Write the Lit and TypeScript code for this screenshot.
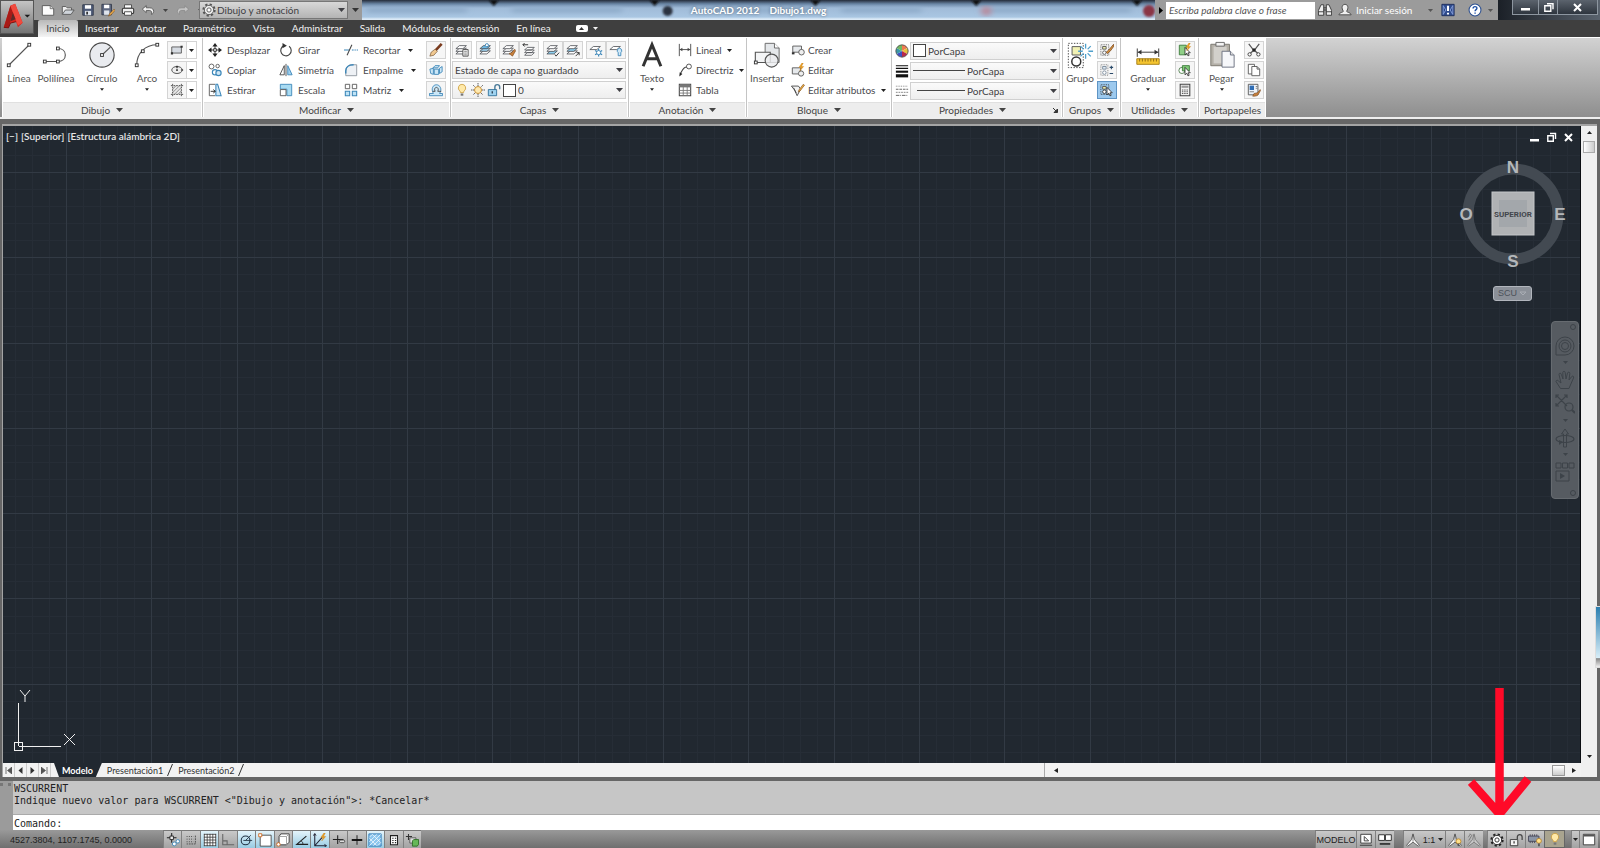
import { LitElement, html, svg, css, nothing, TemplateResult } from "lit";
import { customElement, property } from "lit/decorators.js";

type Glyph = { box: string; art: TemplateResult };

const INK = "#4a4d52";
const BLUE = "#3b86b8";

const layer = (y: number, fill = "#fff") =>
  svg`<path d="M5 ${y}h8l-4 3.5H1z" fill=${fill} stroke=${INK} stroke-width="0.9"/>`;

const layers = (fill = "#fff") => svg`${layer(9, fill)}${layer(6, fill)}${layer(3, fill)}`;

const gear = (stroke: string, fill: string) => svg`
  <circle cx="8" cy="8" r="6.400" fill="none" stroke=${stroke} stroke-width="2.4" stroke-dasharray="2.5 2.52"/>
  <circle cx="8" cy="8" r="5.300" fill=${fill} stroke=${stroke} stroke-width="1"/>
  <circle cx="8" cy="8" r="2.400" fill="#fff" stroke=${stroke} stroke-width="1"/>`;

const bolt = svg`<path d="M12.500 0l-3.500 5h2.500l-1.500 4 4.500-5h-2.500l2-4z" fill="#f0a020" stroke="#b87412" stroke-width="0.4"/>`;
const pencil = svg`<path d="M14 1.500l-5 6.500-.6 2.200 2-1.200 5-6.500z" fill="#f2b440" stroke="#7a4a22" stroke-width="0.7"/>`;
const cursor = svg`<path d="M8 5v8.500l2-1.800 1.400 3 1.400-.7-1.400-2.800h2.600z" fill="#fff" stroke="#222" stroke-width="0.9"/>`;
const bulb = svg`<path d="M8 1.500a4.200 4.200 0 0 0-2.600 7.500c.6.6.8 1.200.8 2h3.600c0-.8.2-1.400.8-2a4.200 4.200 0 0 0-2.600-7.500z" fill="#ffe9a8" stroke="#c99a3a" stroke-width="0.9"/><path d="M6.500 12h3v2.500h-3z" fill="#777"/>`;
const tripod = (fill: string) => svg`<path d="M8 1L6.300 7.500.8 14l1 1L8 10.500l6.200 4.500 1-1-5.500-6.500z" fill=${fill} stroke="#444" stroke-width="0.9"/><path d="M8 2v8" stroke="#444" stroke-width="0.7"/>`;
const node = (x: number, y: number) => svg`<rect x=${x - 1.5} y=${y - 1.5} width="3" height="3" fill="#fff" stroke="#333" stroke-width="1"/>`;

const GLYPHS: Record<string, Glyph> = {
  logo: {
    box: "0 0 34 34",
    art: svg`<path d="M3 28L10 5l5-2 8 20-5 5-2-6-6 1.500-2 5z" fill="#d8261c"/><path d="M3 28L10 5l2.500 7L8 28.500z" fill="#a81a16"/><path d="M10 5l5-2 8 20-5 3z" fill="#f04a3e"/><path d="M12.500 12l3 7.500-5.500 2z" fill="#5c2a28"/><path d="M3 28l5 .5 2-5 6-1.500" stroke="#7a0e0c" fill="none"/><path d="M25 14.500h6l-3 3z" fill="#1a1a1a"/>`,
  },
  fresh: { box: "0 0 16 16", art: svg`<path d="M1.500 3h9l4 3.500v7.500h-13z" fill="#fdfdfd" stroke="#555"/><path d="M10.500 3v3.500h4" fill="#ddd" stroke="#555" stroke-width="0.8"/>` },
  open: { box: "0 0 16 16", art: svg`<path d="M1.500 13V4h4l1.500 1.500h5V8" fill="#eee" stroke="#555"/><path d="M1.500 13L5 8h10l-3.500 5z" fill="#cfd4da" stroke="#555"/>` },
  save: { box: "0 0 16 16", art: svg`<path d="M2 2h12v12H2z" fill="#4e5b78" stroke="#333a4a"/><path d="M4.500 2.500h7v4h-7z" fill="#fff"/><path d="M4.500 9h7v5h-7z" fill="#dfe4ec"/><path d="M6 10h2v3H6z" fill="#333"/>` },
  saveAs: { box: "0 0 16 16", art: svg`<path d="M1 1.500h11v12H1z" fill="#5d6780" stroke="#333a4a"/><path d="M3.500 2h6v4h-6z" fill="#fff"/><path d="M3.500 8.500h6v5h-6z" fill="#dfe4ec"/><path d="M15 7l-5 5-1.500 3 3-1.500 4.500-5z" fill="#f0b050" stroke="#80501a" stroke-width="0.7"/>` },
  print: { box: "0 0 16 16", art: svg`<path d="M4 2h8v4H4z" fill="#fff" stroke="#444"/><rect x="1.500" y="6" width="13" height="6" rx="1.500" fill="#f0f0f0" stroke="#333" stroke-width="1.200"/><path d="M4 10h8v4H4z" fill="#fff" stroke="#444"/>` },
  undo: { box: "0 0 16 16", art: svg`<path d="M1.500 7L6 3v2.500h4c3 0 4.500 2 4.500 4s-1 3-2.500 3.500c1-2 0-4.500-2.500-4.500H6V11z" fill="#f2f2f2" stroke="#555"/>` },
  redo: { box: "0 0 16 16", art: svg`<path d="M14.500 7L10 3v2.500H6c-3 0-4.500 2-4.500 4s1 3 2.500 3.500c-1-2 0-4.500 2.500-4.500H10V11z" fill="#c4c4c4" stroke="#8a8a8a"/>` },
  gear: { box: "0 0 16 16", art: gear("#555", "#eee") },
  gearDark: { box: "0 0 16 16", art: gear("#222", "#fff") },
  find: { box: "0 0 16 16", art: svg`<path d="M3.500 2h3v12h-6V8.500zM12.500 2h-3v12h6V8.500z" fill="#eee" stroke="#333"/><path d="M6.500 5.500h3M6.500 8h3M1 10h5.500M9.500 10h5.500" stroke="#333"/>` },
  user: { box: "0 0 16 16", art: svg`<path d="M8 1.500c2 0 3.300 1.500 3.300 3.700S9.800 9.500 9.800 9.500c.4 1.300 4.700 1 5.200 4H1c.5-3 4.800-2.700 5.200-4 0 0-1.500-2-1.500-4.300S6 1.500 8 1.500z" fill="#f0f0f0" stroke="#444"/>` },
  exchange: { box: "0 0 16 16", art: svg`<path d="M1 1.500h14v13H1z" fill="#2e4a8c" stroke="#1a2a5a"/><path d="M2.500 3v10M13.500 3v10M2.500 3l3 5-3 5M13.500 3l-3 5 3 5" stroke="#8aa2dc" fill="none"/><path d="M8 3v6M8 11v2" stroke="#fff" stroke-width="2.400"/>` },
  help: { box: "0 0 16 16", art: svg`<circle cx="8" cy="8" r="6.800" fill="#fff" stroke="#2c4f8f" stroke-width="1.200"/><path d="M5.800 6.300c0-3 4.500-2.800 4.400-.2 0 1.500-2.100 1.500-2.100 3.400M8.100 10.800v1.600" stroke="#1d4fa5" stroke-width="1.600" fill="none"/>` },
  line: { box: "0 0 30 30", art: svg`<path d="M4 26L26 4" stroke="#555" stroke-width="1.200"/>${node(4, 26)}${node(26, 4)}` },
  polyline: { box: "0 0 30 30", art: svg`<path d="M3 22h14c5 0 8-3 8-7s-3-7-8-7" stroke="#555" stroke-width="1.200" fill="none"/>${node(3, 22)}${node(17, 22)}${node(17, 8)}` },
  circle: { box: "0 0 30 30", art: svg`<circle cx="15" cy="15" r="13" fill="#e9ebef" stroke="#4a4a4a" stroke-width="1.200"/><path d="M15 15l9-8.500" stroke="#555" stroke-width="1.200"/>${node(15, 15)}` },
  arc: { box: "0 0 30 30", art: svg`<path d="M4 26C4 13 13 4 26 4" stroke="#555" stroke-width="1.200" fill="none"/>${node(4, 26)}${node(10.5, 11)}${node(26, 4)}` },
  rect: { box: "0 0 16 16", art: svg`<path d="M2 4.500h11v7H2z" fill="#d6dbe2" stroke="#555"/><path d="M1 10.500h2.500V13H1zM12 3h2.500v2.500H12z" fill="#333"/>` },
  ellipse: { box: "0 0 16 16", art: svg`<ellipse cx="8" cy="8" rx="6" ry="4" fill="#eee" stroke="#444"/><path d="M7 8h2M8 7v2M12.500 8h2.500M8 3v3" stroke="#222" stroke-width="1.400"/>` },
  hatch: { box: "0 0 16 16", art: svg`<path d="M3 3h10v10H3z" fill="#e8e8e8"/><path d="M3 7l4-4M3 11l8-8M5 13l8-8M9 13l4-4" stroke="#777" stroke-width="0.9"/><path d="M1 3h14M1 13h14M3 1v14M13 1v14" stroke="#444" stroke-dasharray="2 1"/>` },
  move: { box: "0 0 16 16", art: svg`<path d="M8 0l3 4H5zM8 16l3-4H5zM0 8l4-3v6zM16 8l-4-3v6z" fill="#222"/><path d="M8 3v10M3 8h10" stroke="#222"/><path d="M6.500 6.500h3v3h-3z" fill="#fff" stroke="#222"/>` },
  rotate: { box: "0 0 16 16", art: svg`<path d="M6 3a6 6 0 1 0 5.500.8" stroke="#444" stroke-width="1.300" fill="none"/><path d="M4 0l5 3-5 3z" fill="#333"/>` },
  trim: { box: "0 0 16 16", art: svg`<path d="M0 8h6M9 8h2M12 8h1.500M14.500 8H16" stroke=${BLUE} stroke-width="1.400"/><path d="M3.500 14L9 2" stroke="#444" stroke-width="1.200"/>` },
  copy: { box: "0 0 16 16", art: svg`<circle cx="4" cy="4" r="2.800" fill="#fff" stroke="#555"/><circle cx="11" cy="3.500" r="2" fill="#fff" stroke="#555"/><circle cx="8" cy="10.500" r="3" fill="#fff" stroke=${BLUE} stroke-width="1.300"/><circle cx="12" cy="11.500" r="3" fill="#cfe6f5" stroke=${BLUE} stroke-width="1.300"/>` },
  mirror: { box: "0 0 16 16", art: svg`<path d="M6 3v10.500H1z" fill="#fff" stroke="#444"/><path d="M10 3v10.500h5z" fill="#9fd0ee" stroke=${BLUE}/><path d="M8 1v14" stroke="#444"/>` },
  fillet: { box: "0 0 16 16", art: svg`<path d="M2 14.500V9c0-4 3-7 7-7h5.500v12.500z" fill="#eef1f5" stroke="#8a939c"/><path d="M2 12V9c0-4 3-7 9-7" stroke=${BLUE} stroke-width="1.600" fill="none"/>` },
  stretch: { box: "0 0 16 16", art: svg`<path d="M8 1.500H1.500v13H8" stroke="#555" fill="none"/><path d="M9 1.500h2l4 13H9z" fill="#cfe8f8" stroke=${BLUE} stroke-width="1.200"/><path d="M3 9.500h5M6 7.500l2.500 2L6 11.500" stroke="#222" fill="none"/>` },
  scale: { box: "0 0 16 16", art: svg`<path d="M1.500 1.500h13v13H9V7H1.500z" fill="#a9dbf2" stroke=${BLUE}/><path d="M1.500 7.500H8v7H1.500z" fill="#fff" stroke="#555"/>` },
  array: { box: "0 0 16 16", art: svg`<path d="M1.500 1.500h5v5h-5zM9.500 1.500h5v5h-5z" fill="#fff" stroke="#555"/><path d="M1.500 9.500h5v5h-5zM9.500 9.500h5v5h-5z" fill="#bfe3f6" stroke=${BLUE} stroke-width="1.200"/>` },
  erase: { box: "0 0 16 16", art: svg`<path d="M14.500 1L7.500 8.500" stroke="#7a3b1e" stroke-width="3"/><path d="M7 7l2.500 2.500-4 4.500-4.500 1 1.500-4.500z" fill="#f0c890" stroke="#7a5a3a" stroke-width="0.8"/>` },
  explode: { box: "0 0 16 16", art: svg`<path d="M4.500 5.500L7 3h5L10 5.500zM1 7l4-1v7l-3-1zM6 7h5v6H6zM12 6l3-2v6l-3 2z" fill="#cbe7f7" stroke=${BLUE}/>` },
  offset: { box: "0 0 16 16", art: svg`<path d="M.5 14.500h15v-2.500H12C15.500 7 12.500 2 8.500 2S2 6.500 5 12H.5z" fill="#cbe7f7" stroke=${BLUE}/><path d="M4 9.500h3C5.500 7 7 5 8.500 5s3 2 1.500 4.500h4" stroke="#444" fill="none"/>` },
  layerProps: { box: "0 0 16 16", art: svg`${layers()}<path d="M9 7.500h6v7.500H9z" fill="#fff" stroke="#444"/><path d="M10.500 9.500h3M10.500 11.500h3M10.500 13.500h3" stroke="#555" stroke-width="0.8"/>` },
  layerMatch: { box: "0 0 16 16", art: svg`${layer(9)}${layer(6, "#9fd3f0")}${layer(3, "#6bb8e4")}<circle cx="9" cy="2.500" r="1.800" fill="#fff" stroke=${BLUE}/>` },
  layerBrush: { box: "0 0 16 16", art: svg`${layers()}<path d="M14.500 7l1 2-3.500 6-4-3 3-1z" fill="#c8803c" stroke="#7a4a22" stroke-width="0.7"/>` },
  layerPrev: { box: "0 0 16 16", art: svg`<path d="M6 11h8l-3 3H3zM6 8h8l-3 3H3zM6 5h8l-3 3H3z" fill="#fff" stroke=${INK} stroke-width="0.9"/><path d="M1 2h6M1 2l2-2M1 2l2 2" stroke="#222" fill="none"/>` },
  layerIso: { box: "0 0 16 16", art: svg`${layer(9, "#8fd0f0")}${layer(6)}${layer(3)}<path d="M10 13l1.500 2L15 11" stroke="#222" fill="none"/>` },
  layerUniso: { box: "0 0 16 16", art: svg`${layer(9)}${layer(6, "#8fd0f0")}${layer(3)}<path d="M11 15l4-4m-3 0h3v3" stroke="#222" fill="none"/>` },
  layerFreeze: { box: "0 0 16 16", art: svg`${layer(4)}<path d="M11 6.500v9M7 8.500l8 5M15 8.500l-8 5" stroke=${BLUE} stroke-width="1.400"/><circle cx="11" cy="11" r="2.400" fill="#fff" stroke=${BLUE}/>` },
  layerOff: { box: "0 0 16 16", art: svg`${layer(4)}<path d="M12 6a2.800 2.800 0 0 0-1.500 5v3.500h3V11A2.800 2.800 0 0 0 12 6z" fill="#cfe8f8" stroke=${BLUE}/>` },
  bulb: { box: "0 0 16 16", art: bulb },
  sun: { box: "0 0 16 16", art: svg`<path d="M8 0v16M0 8h16M2.500 2.500l11 11M13.500 2.500l-11 11" stroke="#4a4a4a" stroke-dasharray="1.500 0.600"/><circle cx="8" cy="8" r="4" fill="#ffe9b0" stroke="#c58a2a"/>` },
  lock: { box: "0 0 16 16", art: svg`<path d="M9 8V4.500c0-3.500 5.500-3.500 5.500 0V7" stroke="#4a7a98" stroke-width="1.600" fill="none"/><path d="M1.500 7.500h9.500v7H1.500z" fill="#9fd3f0" stroke="#2d6f99"/><path d="M6 9.500V12" stroke="#234" stroke-width="1.400"/>` },
  text: { box: "0 0 30 30", art: svg`<path d="M5.500 27L15 4l9.500 23M9 19h12" fill="none" stroke="#333" stroke-width="3.200"/>` },
  linear: { box: "0 0 16 16", art: svg`<path d="M1.500 1v14M14.500 1v14M2 7.500h12" stroke="#444"/><path d="M2 7.500l3-2v4zM14 7.500l-3-2v4z" fill="#444"/>` },
  leader: { box: "0 0 16 16", art: svg`<circle cx="12.500" cy="4" r="2.800" fill="#fff" stroke="#444"/><path d="M10 4.500C6 4.500 5 8 3 12" stroke="#444" stroke-width="1.200" fill="none"/><path d="M1.500 15.500l.5-5 3 2z" fill="#222"/>` },
  table: { box: "0 0 16 16", art: svg`<path d="M1.500 1.500h13v13h-13z" fill="#fff" stroke="#444" stroke-width="1.200"/><path d="M1.500 2h13v3h-13z" fill="#777"/><path d="M1.500 8.500h13M1.500 11.500h13M6 4v10.500M10.500 4v10.500" stroke="#777"/>` },
  insert: { box: "0 0 30 30", art: svg`<path d="M13 2.500h10l5 5v15.500H13z" fill="#e4e7ea" stroke="#666"/><path d="M23 2.500v5h5" fill="#fff" stroke="#666"/><path d="M2.500 12h16v11h-16z" fill="#f3f4f5" stroke="#555" stroke-width="1.200"/><circle cx="20" cy="21" r="7" fill="#eceef0" fill-opacity="0.8" stroke="#555" stroke-width="1.200"/>${node(3, 23)}` },
  blockNew: { box: "0 0 16 16", art: svg`<path d="M2 3.500h10v7H2z" fill="#e6e9ec" stroke="#555"/><circle cx="12" cy="10.500" r="3.200" fill="#eee" stroke="#555"/><path d="M1 10.500h3v2.500H1z" fill="#333"/>` },
  blockEdit: { box: "0 0 16 16", art: svg`<path d="M1.500 5.500h9.500v7H1.500z" fill="#e6e9ec" stroke="#555"/><circle cx="11.500" cy="12" r="3" fill="#eee" stroke="#555"/>${bolt}` },
  blockAttr: { box: "0 0 16 16", art: svg`<path d="M.5 3.500h8L11 7l-4 7.500L4 8z" fill="#f4f4f4" stroke="#444"/><path d="M3 5.500l3 6" stroke="#444"/>${pencil}` },
  wheel: { box: "0 0 16 16", art: svg`<path d="M8 8V1a7 7 0 0 1 6.100 3.500z" fill="#f07a50"/><path d="M8 8l6.100-3.500a7 7 0 0 1 0 7z" fill="#e8c23c"/><path d="M8 8l6.100 3.500A7 7 0 0 1 8 15z" fill="#b82a4a"/><path d="M8 8v7a7 7 0 0 1-6.100-3.500z" fill="#3f4fc4"/><path d="M8 8l-6.100 3.500a7 7 0 0 1 0-7z" fill="#3a98a8"/><path d="M8 8L1.900 4.500A7 7 0 0 1 8 1z" fill="#6fb860"/><circle cx="8" cy="8" r="7" fill="none" stroke="#555"/>` },
  weight: { box: "0 0 16 16", art: svg`<path d="M1 2h14M1 5h14" stroke="#111" stroke-width="1.200"/><path d="M1 8.800h14" stroke="#111" stroke-width="2.400"/><path d="M1 13.500h14" stroke="#111" stroke-width="3.600"/>` },
  dashes: { box: "0 0 16 16", art: svg`<path d="M1 2.500h14" stroke="#777" stroke-dasharray="1 1"/><path d="M1 6h14" stroke="#555" stroke-dasharray="3 1"/><path d="M1 9.500h14" stroke="#777" stroke-dasharray="2 1"/><path d="M1 13h14" stroke="#555" stroke-dasharray="4 1 1 1"/>` },
  group: { box: "0 0 30 30", art: svg`<path d="M2.500 2.500h16v26h-16z" fill="none" stroke="#444" stroke-dasharray="1.500 1.500"/><path d="M6.500 6h9v9h-9z" fill="#f1f1b4" stroke="#555"/><circle cx="11" cy="22" r="4.800" fill="#fff" stroke="#333" stroke-width="1.600"/><path d="M21 3v16M13 11h16M15.500 5.500l11 11M26.500 5.500l-11 11" stroke="#4fa0cc" stroke-width="1.400"/><circle cx="21" cy="11" r="3" fill="#fff"/>` },
  groupEdit: { box: "0 0 16 16", art: svg`<path d="M1 2h9v12H1z" stroke="#555" stroke-dasharray="1 1" fill="none"/><path d="M3 4h4v3H3z" fill="#eea" stroke="#555"/><circle cx="5" cy="11" r="2" fill="#fff" stroke="#555"/><path d="M15.500 1.500L10 8l-3 2.500 1.500 1.500 3-2.500 4.500-6z" fill="#d8923c" stroke="#6a3a12" stroke-width="0.8"/>` },
  groupAdd: { box: "0 0 16 16", art: svg`<path d="M1 2h8v12H1z" stroke="#777" stroke-dasharray="1 1" fill="none"/><path d="M3 4h4v3H3z" fill="#dfeaf4" stroke="#789"/><circle cx="5" cy="11" r="2" fill="#fff" stroke="#789"/><path d="M11 5h4M13 3v4M11 12h4" stroke="#2a4a6a" stroke-width="1.200"/>` },
  groupPick: { box: "0 0 16 16", art: svg`<path d="M1 2h9v11H1z" stroke="#333" stroke-dasharray="1 1" fill="none"/><path d="M3 4h4v3H3z" fill="#eea" stroke="#555"/><circle cx="5" cy="10" r="2" fill="#fff" stroke="#333"/>${cursor}` },
  measure: { box: "0 0 30 30", art: svg`<path d="M3.500 8v9M26.500 8v9M4 12h22" stroke="#333"/><path d="M4 12l4-2.500v5zM26 12l-4-2.500v5z" fill="#333"/><path d="M3 19h24v6H3z" fill="#f4c430" stroke="#a8801a"/><path d="M6 19v3M9 19v3M12 19v3M15 19v3M18 19v3M21 19v3M24 19v3" stroke="#8a6a14"/>` },
  quickSelect: { box: "0 0 16 16", art: svg`<path d="M1.500 2.500h8v11h-8z" fill="#8fcf86" stroke="#3c7a3a"/>${cursor}${bolt}` },
  selectSimilar: { box: "0 0 16 16", art: svg`<circle cx="4.500" cy="8.500" r="3.500" fill="#fff" stroke="#4a7a48"/><path d="M5 3h8v6H5z" fill="#7fca78" stroke="#3c7a3a"/>${cursor}` },
  calc: { box: "0 0 16 16", art: svg`<path d="M2.500 1.500h11v13h-11z" fill="#f2f2f2" stroke="#444" stroke-width="1.200"/><path d="M4 3h8v2.500H4z" fill="#999"/><path d="M4.500 8h7M4.500 10h7M4.500 12h7" stroke="#444" stroke-dasharray="1.600 1"/>` },
  paste: { box: "0 0 30 30", art: svg`<path d="M3 3.500h20v23H3z" fill="#b4b0a8" stroke="#7a766e"/><path d="M6 6h14v18H6z" fill="#d2d0cb"/><path d="M8.500 1.500h9v4h-9z" fill="#f4f4f4" stroke="#666"/><path d="M15 11h9l4 4v13H15z" fill="#f6f7fa" stroke="#6a7080"/><path d="M24 11v4h4" fill="#ddd" stroke="#6a7080"/>` },
  cut: { box: "0 0 16 16", art: svg`<path d="M2 1l5 6.500 5 4M14 1L9 7.500l-5 4" stroke="#555" stroke-width="1.400" fill="none"/><circle cx="3" cy="13" r="1.900" fill="#fff" stroke="#333"/><circle cx="13" cy="13" r="1.900" fill="#fff" stroke="#333"/><circle cx="8" cy="8" r="2" fill="#222"/>` },
  copyClip: { box: "0 0 16 16", art: svg`<path d="M1.500 1.500h7v11h-7z" fill="#fff" stroke="#555"/><path d="M5.500 4h6l3 3v7.500h-9z" fill="#fff" stroke="#555"/><path d="M11.500 4v3h3" fill="none" stroke="#555"/>` },
  matchProps: { box: "0 0 16 16", art: svg`<path d="M1.500 1.500h11v12h-11z" fill="#eef3fa" stroke="#555"/><path d="M3 3h5v5H3z" fill="#2f6db5"/><path d="M3 10h5M10 4h2M10 6h2" stroke="#777"/><path d="M15 7.500l-3 3.500-4 1-1.500 3c3 .5 6.500-.5 7-3l2-3.500z" fill="#c8803c" stroke="#7a4a22" stroke-width="0.7"/>` },
  infer: { box: "0 0 16 16", art: svg`<path d="M6.500 0v11M1 5.500h11" stroke="#222" stroke-width="1.200"/><path d="M4.500 3.500h4v4h-4z" fill="#eee" stroke="#222"/><circle cx="9.500" cy="12.500" r="2.200" fill="#fff" stroke=${BLUE}/><circle cx="13.500" cy="9.500" r="2" fill="#fff" stroke=${BLUE}/>` },
  snap: { box: "0 0 16 16", art: svg`<path d="M3 4h8M3 7h8M3 10h8" stroke="#333" stroke-dasharray="1 1.600"/><path d="M13 3v9.500H3" stroke="#444" stroke-dasharray="2 1" fill="none"/>` },
  grid: { box: "0 0 16 16", art: svg`<path d="M1 1h14v14H1z" fill="#fff"/><path d="M1.500 1v14M4.800 1v14M8 1v14M11.200 1v14M14.500 1v14M1 1.500h14M1 4.800h14M1 8h14M1 11.200h14M1 14.500h14" stroke="#333" stroke-width="0.900"/>` },
  ortho: { box: "0 0 16 16", art: svg`<path d="M2 1v12.500h13M2 9h5v4.500" stroke="#666" fill="none" stroke-width="1.200"/>` },
  polar: { box: "0 0 16 16", art: svg`<circle cx="7.500" cy="8.500" r="5" fill="none" stroke="#234" stroke-width="1.200"/><path d="M5 8.500h10M7.500 8.500l6-6" stroke="#234"/>` },
  osnap: { box: "0 0 16 16", art: svg`<path d="M2.500 2.500h12.500v12.500h-12.500z" fill="#fff" stroke="#444"/><path d="M.8 .8h3.500v3.500H.8z" fill="#fff" stroke="#d2691e"/>` },
  osnap3d: { box: "0 0 16 16", art: svg`<path d="M3.500 4l2-3H15v9.500l-3 3H3.500z" fill="#fff" stroke="#333"/><path d="M3.500 4H12v9.500M12 4l3-3" stroke="#999" fill="none"/><circle cx="2.800" cy="13" r="2" fill="#fff" stroke="#d2691e"/>` },
  otrack: { box: "0 0 16 16", art: svg`<path d="M15 13H2L13 3.500" stroke="#222" stroke-width="1.300" fill="none"/><path d="M7 9c1.500 1 2 2 2 3.500" stroke="#222" fill="none"/>` },
  ducs: { box: "0 0 16 16", art: svg`<path d="M2 1v13.500h13M2.500 14l8-9" stroke="#223" fill="none" stroke-width="1.200"/><path d="M.5 3L2 .5 3.500 3M13 13l2.500 1.500L13 16" stroke="#223" fill="none"/>${bolt}` },
  dyn: { box: "0 0 16 16", art: svg`<path d="M6.500 2.500v10M1 7.500h12" stroke="#222" stroke-width="1.200"/><rect x="8.500" y="8" width="6" height="3" rx="1.500" fill="#ddd" stroke="#444"/>` },
  lwt: { box: "0 0 16 16", art: svg`<path d="M8 2.500v11" stroke="#111"/><path d="M2 8h12" stroke="#111" stroke-width="2.200"/>` },
  transp: { box: "0 0 16 16", art: svg`<path d="M1 1h14v14H1z" fill="#8cc6ee" stroke="#2f78b5"/><path d="M1.500 5l3.500-3.500M1.500 10L10 1.500M1.500 14.500l13-13M6 14.500L14.500 6M11 14.500l3.500-3.500M1.500 6l8.500 8.500M5 1.500l9.500 9.500" stroke="#fff" stroke-width="0.8"/>` },
  quickProps: { box: "0 0 16 16", art: svg`<path d="M4 3h8v10.500H4z" fill="#fff" stroke="#222" stroke-width="1.200"/><path d="M6 6h1.500M9 6h1.500M6 8.500h1.500M9 8.500h1.500M6 11h1.500M9 11h1.500" stroke="#222" stroke-width="1.200"/>` },
  cycle: { box: "0 0 16 16", art: svg`<path d="M4 1v7M1 4h7" stroke="#333" stroke-width="1.200"/><path d="M5.500 5.500h7v6h-7z" fill="#ddd" stroke="#555"/><path d="M8.500 9l1.500-1.500h5.500V13L14 15H8.500z" fill="#66b858" stroke="#2c6b22"/>` },
  modelTab: { box: "0 0 16 16", art: svg`<path d="M2 1.500h12v10H2z" fill="#fff" stroke="#333"/><path d="M6 4v5h5zM1 14h14" stroke="#333" fill="none"/>` },
  views: { box: "0 0 16 16", art: svg`<path d="M.8 2h6.700v6.500H.8zM8.500 2h6.700v6.500H8.500z" fill="#fff" stroke="#222"/><path d="M2 12.500h12" stroke="#333" stroke-width="2"/>` },
  scaleA: { box: "0 0 16 16", art: tripod("#fff") },
  scaleB: { box: "0 0 16 16", art: svg`${tripod("#fff")}<circle cx="12" cy="9.500" r="2.800" fill="#ffe08a" stroke="#c08a2a"/><path d="M12 12v3" stroke="#555" stroke-width="2"/>` },
  scaleC: { box: "0 0 16 16", art: svg`<g opacity="0.6">${tripod("#ddd")}<path d="M1.500 5l2-3.500M2 8.500L6 2M3 1l2 1" stroke="#444"/></g>` },
  lockOpen: { box: "0 0 16 16", art: svg`<path d="M9.500 7V4.500c0-3.500 5.500-3.500 5.500 0V8" stroke="#444" stroke-width="1.400" fill="none"/><path d="M1.500 7.500h8.500v7H1.500z" fill="#f4f4f4" stroke="#333"/><path d="M5.800 9.500V12" stroke="#333" stroke-width="1.400"/>` },
  hardware: { box: "0 0 16 16", art: svg`<path d="M.5 3.500h12v6H.5z" fill="#8b95a5" stroke="#445"/><path d="M2.500 1.500v2M5 1.500v2M7.500 1.500v2M10 1.500v2M2.500 9.500v2M5 9.500v2M7.500 9.500v2" stroke="#445"/><circle cx="12.500" cy="9" r="2.800" fill="#ffe08a" stroke="#b8862a"/><path d="M12.500 12v3" stroke="#555" stroke-width="2"/>` },
  clean: { box: "0 0 16 16", art: svg`<path d="M1.500 1.500h13v12h-13z" fill="#fff" stroke="#333"/><path d="M2 2h12v2H2z" fill="#555"/>` },
  navWheel: { box: "0 0 20 20", art: svg`<path d="M1 10a9 9 0 1 1 9 9H1z" fill="none" stroke="#3d4349"/><circle cx="10" cy="10" r="6" fill="none" stroke="#3d4349"/><circle cx="10" cy="10" r="3.500" fill="none" stroke="#3d4349"/>` },
  navPan: { box: "0 0 20 20", art: svg`<path d="M5.500 18.500L1 11.500c0-1.500 2-1.500 2.500-.5L6 13 4 4.500c0-1.800 2-1.800 2.400 0L8 9 7.800 2.500c.2-1.600 2.200-1.600 2.400 0L11 9l1.500-6c.6-1.500 2.500-1 2.300.5L14 10l2.800-3.500c1-1 2.400 0 1.700 1.500l-3.500 8-1 2.500z" fill="none" stroke="#3d4349"/>` },
  navZoom: { box: "0 0 20 20", art: svg`<path d="M1 1l11 11M12 1L1 12M1 4V1h3M9 1h3v3M1 9v3h3" stroke="#3d4349" fill="none" stroke-width="1.200"/><circle cx="14" cy="13" r="4" fill="none" stroke="#3d4349" stroke-width="1.200"/><path d="M17 16l3 3" stroke="#3d4349" stroke-width="2"/>` },
  navOrbit: { box: "0 0 20 20", art: svg`<path d="M8.500 19V6H6.500L10 1l3.500 5h-2v13z" fill="none" stroke="#3d4349"/><ellipse cx="10" cy="11" rx="9" ry="3.500" fill="none" stroke="#3d4349" stroke-width="1.200"/><path d="M4 12l4 2-4 3z" fill="#3d4349"/>` },
  navMotion: { box: "0 0 20 20", art: svg`<path d="M1 1h5v5H1zM7.500 1h5v5h-5zM14 1h5v5h-5zM1 9h13v10H1z" fill="none" stroke="#3d4349"/><path d="M5 11l5 3-5 3z" fill="#3d4349"/>` },
};

@customElement("cad-icon")
export class CadIcon extends LitElement {
  static styles = css`
    :host { display: inline-flex; flex: none; width: 14px; height: 14px; }
    svg { width: 100%; height: 100%; display: block; fill: none; }
  `;
  @property() name = "";
  render() {
    const g = GLYPHS[this.name];
    return g ? html`<svg viewBox=${g.box} aria-hidden="true">${g.art}</svg>` : nothing;
  }
}

const caret = html`<svg class="caret" viewBox="0 0 7 4" aria-hidden="true"><path d="M0 0h7L3.500 4z" fill="currentColor"/></svg>`;
const dot = html`<svg class="dot" viewBox="0 0 5 3" aria-hidden="true"><path d="M0 0h5L2.500 3z" fill="currentColor"/></svg>`;

const big = (icon: string, label: string, menu = false) => html`
  <button class="big"><cad-icon class="xl" name=${icon}></cad-icon><span>${label}</span>${menu ? dot : nothing}</button>`;
const row = (icon: string, label: string, menu = false) => html`
  <button class="row"><cad-icon name=${icon}></cad-icon><span>${label}</span>${menu ? dot : nothing}</button>`;
const small = (icon: string, label: string, on = false) => html`
  <button class="small ${on ? "on" : ""}" aria-label=${label}><cad-icon name=${icon}></cad-icon></button>`;
const split = (icon: string, label: string) => html`
  <span class="split"><button class="small" aria-label=${label}><cad-icon name=${icon}></cad-icon></button><button class="more" aria-label="${label}, más">${dot}</button></span>`;

const STEP = 85.3;
const MAJORS = [...Array(48).keys()];

const QUICK: [string, string][] = [
  ["fresh", "Nuevo"], ["open", "Abrir"], ["save", "Guardar"], ["saveAs", "Guardar como"], ["print", "Trazar"],
];

const TOGGLES: [string, string, boolean][] = [
  ["infer", "Inferir restricciones", false], ["snap", "Forzcursor", false], ["grid", "Rejilla", true],
  ["ortho", "Orto", false], ["polar", "Rastreo polar", true], ["osnap", "Refent", true],
  ["osnap3d", "Refent 3D", false], ["otrack", "Rastreo", true], ["ducs", "SCP dinámico", true],
  ["dyn", "Entrada dinámica", false], ["lwt", "Grosor de línea", false], ["transp", "Transparencia", true],
  ["quickProps", "Propiedades rápidas", false], ["cycle", "Ciclo de selección", false],
];

@customElement("app-root")
export class AppRoot extends LitElement {
  static styles = css`
    :host { display: flex; flex-direction: column; position: relative; height: 100vh; min-height: 600px; overflow: hidden; background: #666;
      font: 10px/14px Lato, "Open Sans", sans-serif; color: #3f3f44; }
    * { box-sizing: border-box; }
    button, select, input { font: inherit; color: inherit; margin: 0; padding: 0; border: 0; background: none; }
    button { display: flex; align-items: center; white-space: nowrap; }
    .caret { width: 7px; height: 4px; flex: none; }
    .dot { width: 5px; height: 3px; flex: none; }

    .header { display: grid; grid-template-columns: 34px minmax(0, 1fr); grid-template-rows: 20px 17px; flex: none; background: #3f3f3f; }
    .logo { grid-row: 1 / 3; background: linear-gradient(#c4c4c4, #747474); border: 1px solid #555; height: 34px; }
    .logo cad-icon { width: 32px; height: 32px; }
    .title { display: flex; background: #9b9b9b; min-width: 0; }
    .quick { display: flex; align-items: center; gap: 6px; padding-left: 7px; width: 165px; flex: none; color: #444; }
    .quick .dot { margin: 0 2px; }
    .workspace { display: flex; align-items: center; gap: 1px; width: 149px; height: 18px; flex: none; border: 1px solid #777; background: linear-gradient(#d8d8d8, #b4b4b4); padding: 0 2px; margin-top: 1px; }
    .workspace select, .combo select { appearance: none; flex: 1; min-width: 0; height: 100%; }
    .custom { width: 14px; flex: none; justify-content: center; color: #333; }
    .glass { flex: 1; min-width: 0; display: flex; justify-content: center; align-items: center; overflow: hidden; background: linear-gradient(#252c3a, #6b87a6 4px, #a0bbd8 8px, #a9c6e2 17px, #dbe9f6 19px);
      color: #fff; font-weight: 700; gap: 10px; text-shadow: 0 0 3px #567; position: relative; }
    .glass svg { position: absolute; inset: 0; width: 100%; height: 100%; }
    .glass span { position: relative; }
    .info { display: flex; align-items: center; flex: none; color: #444; }
    .collapse { width: 11px; justify-content: center; color: #000; }
    .search { width: 149px; height: 17px; background: #fff; font-style: italic; padding: 0 3px; margin-right: 3px; }
    .search::placeholder { color: #555; opacity: 1; }
    .signin { gap: 4px; width: 95px; margin-left: 6px; color: #fff; }
    .signin .dot { margin-left: auto; color: #555; }
    .info .helps { gap: 6px; margin: 0 5px 0 13px; color: #555; }
    .exch { margin-left: 8px; }
    .window { display: flex; width: 102px; flex: none; padding-left: 14px; background: linear-gradient(90deg, #1b2027, #59626d); }
    .window button { width: 27px; height: 15px; justify-content: center; border: 1px solid #8d96a0; border-top: 0; background: linear-gradient(#5b636d, #2e353e); }
    .window button:nth-child(2) { width: 19px; border-left: 0; }
    .window button:last-child { width: 40px; border-left: 0; }
    .window svg { width: 11px; height: 9px; }

    .tabs { display: flex; align-items: stretch; padding-left: 4px; color: #f2f2f2; gap: 17px; line-height: 17px; }
    .tabs a { color: inherit; text-decoration: none; white-space: nowrap; }
    .tabs .active { background: linear-gradient(#b9b9b9, #f4f4f4); color: #444; width: 40px; text-align: center; margin-right: -10px; border-radius: 2px 2px 0 0; }
    .pill { width: 22px; margin-left: 8px; gap: 5px; }
    .pill i { width: 12px; height: 7px; border-radius: 2px; background: #fff; display: flex; align-items: center; justify-content: center; color: #333; }

    .ribbon { display: flex; height: 82px; flex: none; padding: 0 1px 0 2px; background: linear-gradient(#d2d2d2, #8e8e8e); border-top: 1px solid #fff; border-bottom: 2px solid #eee; }
    .panel { display: flex; flex-direction: column; flex: none; background: #fff; border-right: 1px solid #c4c4c4; }
    .body { display: flex; height: 64px; padding-top: 2px; }
    .name { display: flex; align-items: center; justify-content: center; gap: 6px; height: 15px; background: #ededed; border-top: 1px solid #e0e0e0; margin: 0 1px; color: #444; position: relative; }
    .launch { position: absolute; right: 3px; top: 4px; width: 6px; height: 6px; }
    .big { flex-direction: column; color: #555; }
    .big .xl { width: 28px; height: 30px; }
    .big span { line-height: 16px; }
    .big .dot { margin-top: 2px; width: 4px; color: #222; }
    .col { display: grid; grid-template-rows: repeat(3, 20px); flex: none; }
    .row { gap: 5px; height: 20px; color: #4a4a4e; }
    .row .dot { margin-left: 3px; color: #222; }
    .small { width: 20px; height: 18px; margin-top: 1px; justify-content: center; border: 1px solid #d4d4d4; background: #f6f6f6; }
    .on { background: #9cc9ee; border-color: #5e94c4; }
    .split { display: flex; }
    .more { width: 10px; height: 18px; margin-top: 1px; justify-content: center; border: 1px solid #d4d4d4; border-left: 0; color: #222; }
    .combo { display: flex; align-items: center; height: 18px; margin-top: 1px; border: 1px solid #d0d0d0; background: linear-gradient(#fafafa, #eee); padding: 0 2px; gap: 2px; }
    .swatch { width: 13px; height: 13px; border: 1px solid #444; background: #fff; flex: none; }
    .stroke { height: 1px; background: #444; flex: none; width: 52px; }
    .stroke.short { width: 48px; margin-left: 4px; }

    .draw { width: 201px; } .draw .body { padding-left: 1px; }
    .draw .big { width: 32px; } .draw .big:nth-child(2) { width: 42px; } .draw .big:nth-child(3) { width: 50px; } .draw .big:nth-child(4) { width: 40px; }
    .modify { width: 248px; } .modify .body { padding-left: 5px; }
    .modify .c1 { width: 71px; } .modify .c2 { width: 65px; } .modify .c3 { width: 82px; }
    .layers { width: 178px; } .layers .body { flex-direction: column; padding: 2px 2px 0 1px; }
    .tools { display: flex; height: 20px; justify-content: space-between; }
    .tools span { display: flex; }
    .layers .combo { margin-bottom: 1px; }
    .annot { width: 118px; } .annot .body { padding-left: 5px; }
    .annot .big { width: 36px; } .annot .col { margin-left: 8px; }
    .annot .row { gap: 4px; } .annot .row .dot { margin-left: 1px; }
    .block { width: 145px; } .block .body { padding-left: 2px; }
    .block .big { width: 36px; } .block .col { margin-left: 6px; }
    .block .row { gap: 3px; }
    .props { width: 171px; } .props .body { padding-left: 3px; } .props .name { padding-right: 9px; }
    .props .line { display: grid; grid-template-columns: 15px 150px; align-items: center; }
    .props .line cad-icon { margin-top: 1px; }
    .groups { width: 58px; } .groups .body { padding-left: 1px; } .groups .big { width: 32px; margin-right: 1px; }
    .utils { width: 78px; } .utils .big { width: 54px; }
    .clip { width: 67px; border-right: 0; } .clip .big { width: 45px; }

    .frame { display: grid; grid-template-columns: minmax(0, 1fr) 16px; grid-template-rows: minmax(0, 1fr) 14px; flex: 1; min-height: 0; margin: 5px 3px 0 2px; border: 1px solid #a4a4a4; border-top-width: 2px; border-right: 0; border-bottom: 0; }
    .canvas { position: relative; overflow: hidden; background: #212830; border-right: 1px solid #0b0e12; }
    .gridlines { position: absolute; inset: 0; width: 100%; height: 100%; }
    .viewname { position: absolute; left: 3px; top: 3px; color: #e6e6e6; font: 600 10px/15px Lato, sans-serif; display: flex; gap: 3px; }
    .mdi { position: absolute; right: 6px; top: 6px; display: flex; gap: 6px; }
    .mdi svg { width: 11px; height: 11px; }
    .compass { position: absolute; right: 10px; top: 32px; width: 116px; height: 116px; }
    .compass text { font: 700 17px "Liberation Sans", sans-serif; fill: #b4b7ba; text-anchor: middle; }
    .compass .face { font: 700 8px Roboto, sans-serif; fill: #42464c; }
    .scu { position: absolute; right: 48px; top: 160px; width: 39px; height: 15px; justify-content: space-between; border: 1px solid #b2b6bd; border-radius: 3px; background: #8b9098; color: #4c5158; padding: 0 4px; font: 9px/13px "Liberation Sans", sans-serif; }
    .scu svg { width: 8px; height: 5px; }
    .nav { position: absolute; right: 1px; top: 195px; width: 28px; height: 178px; display: flex; flex-direction: column; align-items: center; background: #565b61; border: 1px solid #666b70; border-radius: 4px; padding-top: 14px; color: #3d4349; }
    .nav cad-icon { width: 20px; height: 20px; }
    .nav .dot { margin: 5px 0 6px; }
    .nav .gap { margin-top: 4px; }
    .nav .ring { position: absolute; right: 2px; width: 6px; height: 6px; border: 1px solid #3d4349; border-radius: 50%; }
    .nav .top { top: 2px; } .nav .low { bottom: 2px; }
    .axes { position: absolute; left: 9px; bottom: 7px; width: 72px; height: 68px; }
    .vscroll { display: flex; flex-direction: column; justify-content: space-between; align-items: center; background: #f0f0f0; padding: 5px 0; color: #222; }
    .vscroll i { width: 12px; height: 12px; border: 1px solid #aaa; background: linear-gradient(90deg, #fff, #ccc); margin: 7px 0 auto; }
    .sheets { display: flex; align-items: stretch; background: #f2f2f2; min-width: 0; }
    .sheets > button { width: 12px; justify-content: center; border-right: 1px solid #ccc; flex: none; }
    .sheets > button svg { width: 7px; height: 7px; }
    .sheet { height: 14px; font: 9px/15px Lato, sans-serif; color: #333; text-decoration: none; padding: 0 4px 0 5px; }
    .sheet.model { background: #212830; color: #fff; font-weight: 700; clip-path: polygon(0 0, 100% 0, calc(100% - 6px) 100%, 5px 100%); padding: 0 9px 0 8px; margin-left: 3px; }
    .slash { width: 6px; height: 12px; flex: none; margin-top: 1px; }
    .hscroll { display: flex; align-items: center; margin-left: auto; width: 34%; border-left: 1px solid #aaa; padding: 0 5px 0 9px; color: #222; }
    .hscroll svg { width: 4px; height: 5px; }
    .hscroll i { width: 13px; height: 11px; border: 1px solid #999; background: linear-gradient(#fff, #ccc); margin: 0 7px 0 auto; }
    .corner { background: #f0f0f0; }

    .command { display: grid; grid-template-columns: 13px minmax(0, 1fr); flex: none; margin-top: 4px; background: #9b9b9b; font: 10px/12px "DejaVu Sans Mono", "Liberation Mono", monospace; color: #222; }
    .grip { border-top: 3px dotted #777; width: 11px; margin-top: 2px; }
    .log { background: #c6c6c6; height: 34px; padding: 2px 1px; white-space: pre; border-bottom: 1px solid #aaa; }
    .prompt { grid-column: 2; display: flex; height: 15px; background: #fff; padding-left: 1px; line-height: 18px; }
    .prompt input { flex: 1; outline: 0; }

    .status { display: flex; align-items: stretch; height: 18px; flex: none; background: linear-gradient(#999, #6f6f6f); color: #222; }
    .coords { width: 163px; padding-left: 10px; font: 9px/20px "Liberation Sans", sans-serif; flex: none; }
    .toggles { display: grid; grid-template-columns: repeat(14, 1fr); width: 258px; flex: none; }
    .status button { justify-content: center; background: linear-gradient(#c9c9c9, #a2a2a2); border-left: 1px solid #808080; border-top: 1px solid #777; }
    .toggles .lit { background: linear-gradient(#e4f4fb, #98cbe2); }
    .right { display: flex; margin-left: auto; padding-right: 2px; font: 9px/14px "Liberation Sans", sans-serif; }
    .right button { width: 19px; }
    .right .model { width: 41px; }
    .right .scale { width: 42px; gap: 3px; margin-left: 9px; }
    .right .work { margin-left: 4px; }
    .right .yellow { width: 21px; background: #a9a48f; border: 1px solid #666; }
    .right .thin { width: 8px; margin-left: 6px; }

    .edge { position: absolute; right: 0; top: 606px; width: 5px; height: 62px; border: 1px solid #ddd; background: linear-gradient(#2b7fb0, #d8eef8 85%, #888 86%, #eee); border-right: 0; }
    .pointer { position: absolute; right: 68px; bottom: 33px; width: 64px; height: 127px; pointer-events: none; }
  `;

  private header() {
    return html`
      <header class="header">
        <button class="logo" aria-label="Menú de la aplicación"><cad-icon name="logo"></cad-icon></button>
        <div class="title">
          <div class="quick">
            ${QUICK.map(([icon, label]) => html`<button aria-label=${label}><cad-icon name=${icon}></cad-icon></button>`)}
            <button aria-label="Deshacer"><cad-icon name="undo"></cad-icon></button>${dot}
            <button aria-label="Rehacer"><cad-icon name="redo"></cad-icon></button>${dot}
          </div>
          <label class="workspace"><cad-icon name="gear"></cad-icon>
            <select aria-label="Espacio de trabajo"><option>Dibujo y anotación</option></select>${caret}</label>
          <button class="custom" aria-label="Personalizar">${caret}</button>
          <div class="glass">
            <svg preserveAspectRatio="none" viewBox="0 0 794 20" aria-hidden="true">
              <defs><filter id="soft"><feGaussianBlur stdDeviation="3 2"/></filter><filter id="crisp"><feGaussianBlur stdDeviation="1"/></filter></defs>
              <g filter="url(#soft)">
                <path d="M5 10h100M150 10h110M330 10h130M480 10h80M620 10h150" stroke="#8eabc9" stroke-width="5"/>
                <circle cx="625" cy="11" r="5" fill="#b88a9c"/>
              </g>
              <g filter="url(#crisp)">
                <circle cx="306" cy="11" r="5" fill="#2a3340"/><circle cx="788" cy="11" r="6" fill="#8a3444"/>
                <path d="M127 0h10l-5 6zM288 0h10l-5 6zM449 0h10l-5 6zM610 0h10l-5 6zM771 0h10l-5 6z" fill="#111"/>
              </g>
            </svg>
            <span>AutoCAD 2012</span><span>Dibujo1.dwg</span>
          </div>
          <div class="info">
            <button class="collapse" aria-label="Contraer"><svg width="4" height="7" viewBox="0 0 4 7"><path d="M0 0v7l4-3.500z" fill="currentColor"/></svg></button>
            <input class="search" aria-label="Buscar" placeholder="Escriba palabra clave o frase">
            <button aria-label="Buscar"><cad-icon name="find"></cad-icon></button>
            <button class="signin"><cad-icon name="user"></cad-icon><span>Iniciar sesión</span>${dot}</button>
            <button class="exch" aria-label="Exchange"><cad-icon name="exchange"></cad-icon></button>
            <button class="helps" aria-label="Ayuda"><cad-icon name="help"></cad-icon>${dot}</button>
          </div>
          <div class="window">
            <button aria-label="Minimizar"><svg viewBox="0 0 11 9"><path d="M1 5h9v2.500H1z" fill="#fff"/></svg></button>
            <button aria-label="Restaurar"><svg viewBox="0 0 11 9"><path d="M4 .7h6v5.500M1.800 2.800h6v5.500h-6z" fill="none" stroke="#fff" stroke-width="1.400"/></svg></button>
            <button aria-label="Cerrar"><svg viewBox="0 0 11 9"><path d="M2 1l7 7M9 1L2 8" stroke="#fff" stroke-width="2"/></svg></button>
          </div>
        </div>
        <nav class="tabs">
          <a class="active" href="#inicio">Inicio</a>
          ${["Insertar", "Anotar", "Paramétrico", "Vista", "Administrar", "Salida", "Módulos de extensión", "En línea"].map((t) => html`<a href="#${t}">${t}</a>`)}
          <button class="pill" aria-label="Minimizar cinta"><i><svg width="5" height="3" viewBox="0 0 5 3"><path d="M0 3h5L2.500 0z" fill="currentColor"/></svg></i>${dot}</button>
        </nav>
      </header>`;
  }

  private ribbon() {
    return html`
      <section class="ribbon">
        <div class="panel draw">
          <div class="body">
            ${big("line", "Línea")}${big("polyline", "Polilínea")}${big("circle", "Círculo", true)}${big("arc", "Arco", true)}
            <div class="col">${split("rect", "Rectángulo")}${split("ellipse", "Elipse")}${split("hatch", "Sombreado")}</div>
          </div>
          <div class="name">Dibujo ${caret}</div>
        </div>
        <div class="panel modify">
          <div class="body">
            <div class="col c1">${row("move", "Desplazar")}${row("copy", "Copiar")}${row("stretch", "Estirar")}</div>
            <div class="col c2">${row("rotate", "Girar")}${row("mirror", "Simetría")}${row("scale", "Escala")}</div>
            <div class="col c3">${row("trim", "Recortar", true)}${row("fillet", "Empalme", true)}${row("array", "Matriz", true)}</div>
            <div class="col">${small("erase", "Borrar")}${small("explode", "Descomponer")}${small("offset", "Desfase")}</div>
          </div>
          <div class="name">Modificar ${caret}</div>
        </div>
        <div class="panel layers">
          <div class="body">
            <div class="tools">
              ${small("layerProps", "Propiedades de capas")}${small("layerMatch", "Definir actual")}
              <span>${small("layerBrush", "Igualar")}${small("layerPrev", "Previa")}</span>
              <span>${small("layerIso", "Aislar")}${small("layerUniso", "Desaislar")}</span>
              <span>${small("layerFreeze", "Inutilizar")}${small("layerOff", "Desactivar")}</span>
            </div>
            <label class="combo"><select aria-label="Estado de capa"><option>Estado de capa no guardado</option></select>${caret}</label>
            <label class="combo"><cad-icon name="bulb"></cad-icon><cad-icon name="sun"></cad-icon><cad-icon name="lock"></cad-icon><span class="swatch"></span>
              <select aria-label="Capa"><option>0</option></select>${caret}</label>
          </div>
          <div class="name">Capas ${caret}</div>
        </div>
        <div class="panel annot">
          <div class="body">
            ${big("text", "Texto", true)}
            <div class="col">${row("linear", "Lineal", true)}${row("leader", "Directriz", true)}${row("table", "Tabla")}</div>
          </div>
          <div class="name">Anotación ${caret}</div>
        </div>
        <div class="panel block">
          <div class="body">
            ${big("insert", "Insertar")}
            <div class="col">${row("blockNew", "Crear")}${row("blockEdit", "Editar")}${row("blockAttr", "Editar atributos", true)}</div>
          </div>
          <div class="name">Bloque ${caret}</div>
        </div>
        <div class="panel props">
          <div class="body">
            <div class="col">
              <label class="line"><cad-icon name="wheel"></cad-icon><span class="combo"><span class="swatch"></span><select aria-label="Color"><option>PorCapa</option></select>${caret}</span></label>
              <label class="line"><cad-icon name="weight"></cad-icon><span class="combo"><span class="stroke"></span><select aria-label="Grosor"><option>PorCapa</option></select>${caret}</span></label>
              <label class="line"><cad-icon name="dashes"></cad-icon><span class="combo"><span class="stroke short"></span><select aria-label="Tipo de línea"><option>PorCapa</option></select>${caret}</span></label>
            </div>
          </div>
          <div class="name">Propiedades ${caret}
            <svg class="launch" viewBox="0 0 6 6"><path d="M1 1l3 3M5.500 2v3.500H2z" stroke="#333" fill="#333"/></svg></div>
        </div>
        <div class="panel groups">
          <div class="body">
            ${big("group", "Grupo")}
            <div class="col">${small("groupEdit", "Editar grupo")}${small("groupAdd", "Desagrupar")}${small("groupPick", "Selección de grupo", true)}</div>
          </div>
          <div class="name">Grupos ${caret}</div>
        </div>
        <div class="panel utils">
          <div class="body">
            ${big("measure", "Graduar", true)}
            <div class="col">${small("quickSelect", "Selección rápida")}${small("selectSimilar", "Seleccionar similares")}${small("calc", "Calculadora")}</div>
          </div>
          <div class="name">Utilidades ${caret}</div>
        </div>
        <div class="panel clip">
          <div class="body">
            ${big("paste", "Pegar", true)}
            <div class="col">${small("cut", "Cortar")}${small("copyClip", "Copiar")}${small("matchProps", "Igualar propiedades")}</div>
          </div>
          <div class="name">Portapapeles</div>
        </div>
      </section>`;
  }

  private gridlines() {
    const x0 = 63 - STEP;
    const y0 = 46 - STEP;
    const minor = (o: number, i: number) => [1, 2, 3, 4].map((k) => Math.round(o + STEP * i + (STEP / 5) * k));
    const major = (o: number, i: number) => Math.round(o + STEP * i);
    return html`
      <svg class="gridlines" aria-hidden="true" shape-rendering="crispEdges">
        ${MAJORS.map((i) => svg`
          ${minor(x0, i).map((x) => svg`<rect x=${x} width="1" height="100%" fill="#262d36"/>`)}
          ${minor(y0, i).map((y) => svg`<rect y=${y} width="100%" height="1" fill="#262d36"/>`)}`)}
        ${MAJORS.map((i) => svg`
          <rect x=${major(x0, i)} width="1" height="100%" fill="#323a44"/>
          <rect y=${major(y0, i)} width="100%" height="1" fill="#323a44"/>`)}
      </svg>`;
  }

  private viewport() {
    return html`
      <main class="frame">
        <div class="canvas">
          ${this.gridlines()}
          <div class="viewname"><span>[−]</span><span>[Superior]</span><span>[Estructura alámbrica 2D]</span></div>
          <div class="mdi">
            <button aria-label="Minimizar dibujo"><svg viewBox="0 0 11 11"><path d="M1 7h9v2.500H1z" fill="#fff"/></svg></button>
            <button aria-label="Restaurar dibujo"><svg viewBox="0 0 11 11"><path d="M4 1.500h5.500V7M1.800 3.800h5.500v5.500H1.800z" fill="none" stroke="#fff" stroke-width="1.400"/></svg></button>
            <button aria-label="Cerrar dibujo"><svg viewBox="0 0 11 11"><path d="M2 2l7 7M9 2L2 9" stroke="#fff" stroke-width="2"/></svg></button>
          </div>
          <svg class="compass" viewBox="0 0 116 116">
            <circle cx="59" cy="56" r="45" fill="none" stroke="#434a52" stroke-width="11"/>
            <rect x="38" y="34" width="42" height="43" fill="#b0b2b4" stroke="#c4c6c8"/>
            <rect x="45" y="42" width="28" height="27" fill="#a3a7ab"/>
            <text x="59" y="15">N</text><text x="59" y="109">S</text><text x="12" y="62">O</text><text x="106" y="62">E</text>
            <text class="face" x="59" y="59">SUPERIOR</text>
          </svg>
          <button class="scu">SCU <svg viewBox="0 0 8 5"><path d="M1 1h6L4 4z" fill="none" stroke="#a9adb4"/></svg></button>
          <div class="nav">
            <span class="ring top"></span>
            <cad-icon name="navWheel"></cad-icon>${dot}
            <cad-icon name="navPan"></cad-icon>
            <cad-icon class="gap" name="navZoom"></cad-icon>${dot}
            <cad-icon name="navOrbit"></cad-icon>${dot}
            <cad-icon name="navMotion"></cad-icon>
            <span class="ring low"></span>
          </div>
          <svg class="axes" viewBox="0 0 72 68" aria-hidden="true" fill="none" stroke="#f0f0f0">
            <path d="M6.500 15v43M7 58.500h42"/><rect x="2.500" y="54.500" width="8" height="8"/>
            <path d="M8 2l5 6 5-6M13 8v6M52 46l11 11M63 46L52 57"/>
          </svg>
        </div>
        <div class="vscroll">
          <svg class="dot" viewBox="0 0 5 3"><path d="M0 3h5L2.500 0z" fill="currentColor"/></svg><i></i>${dot}
        </div>
        <div class="sheets">
          <button aria-label="Primera"><svg viewBox="0 0 7 7"><path d="M1 0v7M7 0v7L2.500 3.500z" stroke="#555" fill="#555" stroke-width="0.800"/></svg></button>
          <button aria-label="Anterior"><svg viewBox="0 0 7 7"><path d="M5.500 0v7L1.500 3.500z" fill="#333"/></svg></button>
          <button aria-label="Siguiente"><svg viewBox="0 0 7 7"><path d="M1.500 0v7l4-3.500z" fill="#333"/></svg></button>
          <button aria-label="Última"><svg viewBox="0 0 7 7"><path d="M6 0v7M0 0v7l4.500-3.500z" stroke="#555" fill="#555" stroke-width="0.800"/></svg></button>
          <a class="sheet model" href="#modelo">Modelo</a>
          <a class="sheet" href="#p1">Presentación1</a><svg class="slash" viewBox="0 0 6 12"><path d="M5.500 0L.5 12" stroke="#333"/></svg>
          <a class="sheet" href="#p2">Presentación2</a><svg class="slash" viewBox="0 0 6 12"><path d="M5.500 0L.5 12" stroke="#333"/></svg>
          <div class="hscroll">
            <svg viewBox="0 0 4 5"><path d="M4 0v5L0 2.500z" fill="currentColor"/></svg><i></i>
            <svg viewBox="0 0 4 5"><path d="M0 0v5l4-2.500z" fill="currentColor"/></svg>
          </div>
        </div>
        <div class="corner"></div>
      </main>`;
  }

  render() {
    return html`
      ${this.header()} ${this.ribbon()} ${this.viewport()}
      <section class="command">
        <div class="grip"></div>
        <div class="log"><div>WSCURRENT</div><div>Indique nuevo valor para WSCURRENT &lt;"Dibujo y anotación"&gt;: *Cancelar*</div></div>
        <label class="prompt">Comando:<input type="text" aria-label="Comando"></label>
      </section>
      <footer class="status">
        <div class="coords">4527.3804, 1107.1745, 0.0000</div>
        <div class="toggles">
          ${TOGGLES.map(([icon, label, on]) => html`<button class=${on ? "lit" : ""} aria-label=${label}><cad-icon name=${icon}></cad-icon></button>`)}
        </div>
        <div class="right">
          <button class="model">MODELO</button>
          <button aria-label="Modelo"><cad-icon name="modelTab"></cad-icon></button>
          <button aria-label="Vistas"><cad-icon name="views"></cad-icon></button>
          <button class="scale"><cad-icon name="scaleA"></cad-icon>1:1${dot}</button>
          <button aria-label="Visibilidad"><cad-icon name="scaleB"></cad-icon></button>
          <button aria-label="Escalas automáticas"><cad-icon name="scaleC"></cad-icon></button>
          <button class="work" aria-label="Cambio de espacio de trabajo"><cad-icon name="gearDark"></cad-icon></button>
          <button aria-label="Bloquear"><cad-icon name="lockOpen"></cad-icon></button>
          <button aria-label="Hardware"><cad-icon name="hardware"></cad-icon></button>
          <button class="yellow" aria-label="Aislar objetos"><cad-icon name="bulb"></cad-icon></button>
          <button class="thin" aria-label="Menú de barra">${dot}</button>
          <button aria-label="Limpiar pantalla"><cad-icon name="clean"></cad-icon></button>
        </div>
      </footer>
      <div class="edge"></div>
      <svg class="pointer" viewBox="0 0 64 127" aria-hidden="true">
        <path d="M31.500 0v122M3 94l28.500 32L60 91" fill="none" stroke="#ff0a28" stroke-width="8.500"/>
      </svg>`;
  }
}
